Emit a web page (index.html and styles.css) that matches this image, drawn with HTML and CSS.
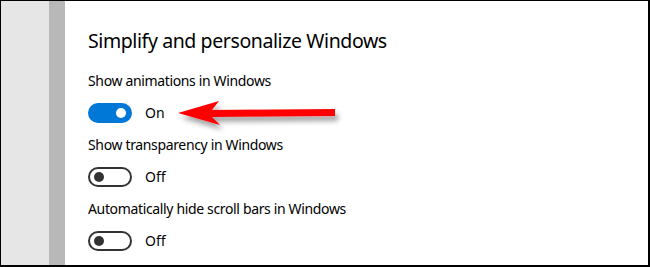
FILE: index.html
```html
<!DOCTYPE html>
<html lang="en">
<head>
    <meta charset="UTF-8">
    <title>Ease of Access - Display</title>
    <link rel="stylesheet" href="styles.css">
</head>
<body>
    <div class="frame">
        <div class="nav"></div>
        <div class="strip"></div>

        <div class="content">
            <h1 class="title">Simplify and personalize Windows</h1>

            <div class="setting">
                <div class="label">Show animations in Windows</div>
                <div class="toggle-row">
                    <span class="toggle on"><span class="thumb"></span></span>
                    <span class="state">On</span>
                </div>
            </div>

            <div class="setting">
                <div class="label">Show transparency in Windows</div>
                <div class="toggle-row">
                    <span class="toggle"><span class="thumb"></span></span>
                    <span class="state">Off</span>
                </div>
            </div>

            <div class="setting">
                <div class="label">Automatically hide scroll bars in Windows</div>
                <div class="toggle-row">
                    <span class="toggle"><span class="thumb"></span></span>
                    <span class="state">Off</span>
                </div>
            </div>

            <!-- red callout arrow pointing at the first toggle -->
            <svg class="arrow" width="180" height="40" viewBox="0 0 180 40">
                <defs>
                    <filter id="shadow" x="-10%" y="-40%" width="130%" height="200%">
                        <feDropShadow dx="3" dy="5" stdDeviation="2.5" flood-color="#000" flood-opacity="0.35"/>
                    </filter>
                </defs>
                <polygon filter="url(#shadow)" fill="#ff0000"
                         points="2,13 43,1 36,10 159,9 159,16 36,17 44,25"/>
            </svg>
        </div>
    </div>
</body>
</html>
```

FILE: styles.css
```css
body {
    margin: 0;
    font-family: "Noto Sans", "Open Sans", sans-serif;
    color: #000;
    background: #fff;
}

.frame {
    display: flex;
    width: 650px;
    height: 267px;
    box-sizing: border-box;
    border: 1px solid #000;
    border-right-width: 2px;
    border-bottom-width: 2px;
    overflow: hidden;
}

.nav {
    width: 48px;
    background-color: #e6e6e6;
}

.strip {
    width: 16px;
    background-color: #b8b8b8;
}

.content {
    flex: 1;
    position: relative;
    padding: 26px 0 0 23px;
}

.title {
    margin: 0 0 16px;
    font-size: 19.5px;
    font-weight: normal;
    line-height: 28px;
    letter-spacing: -0.4px;
}

.setting {
    margin-bottom: 12px;
}

.label {
    font-size: 14px;
    line-height: 20px;
    letter-spacing: -0.35px;
}

.toggle-row {
    display: flex;
    align-items: center;
    margin-top: 12px;
}

.toggle {
    width: 44px;
    height: 20px;
    box-sizing: border-box;
    border: 2px solid #333;
    border-radius: 10px;
    display: flex;
    align-items: center;
    padding: 0 4px;
}

.thumb {
    width: 10px;
    height: 10px;
    border-radius: 50%;
    background-color: #333;
}

.toggle.on {
    background-color: #0078d7;
    border-color: #0078d7;
    justify-content: flex-end;
}

.toggle.on .thumb {
    background-color: #fff;
}

.state {
    margin-left: 13px;
    font-size: 14px;
    line-height: 20px;
}

.arrow {
    position: absolute;
    left: 111px;
    top: 99px;
}
```
